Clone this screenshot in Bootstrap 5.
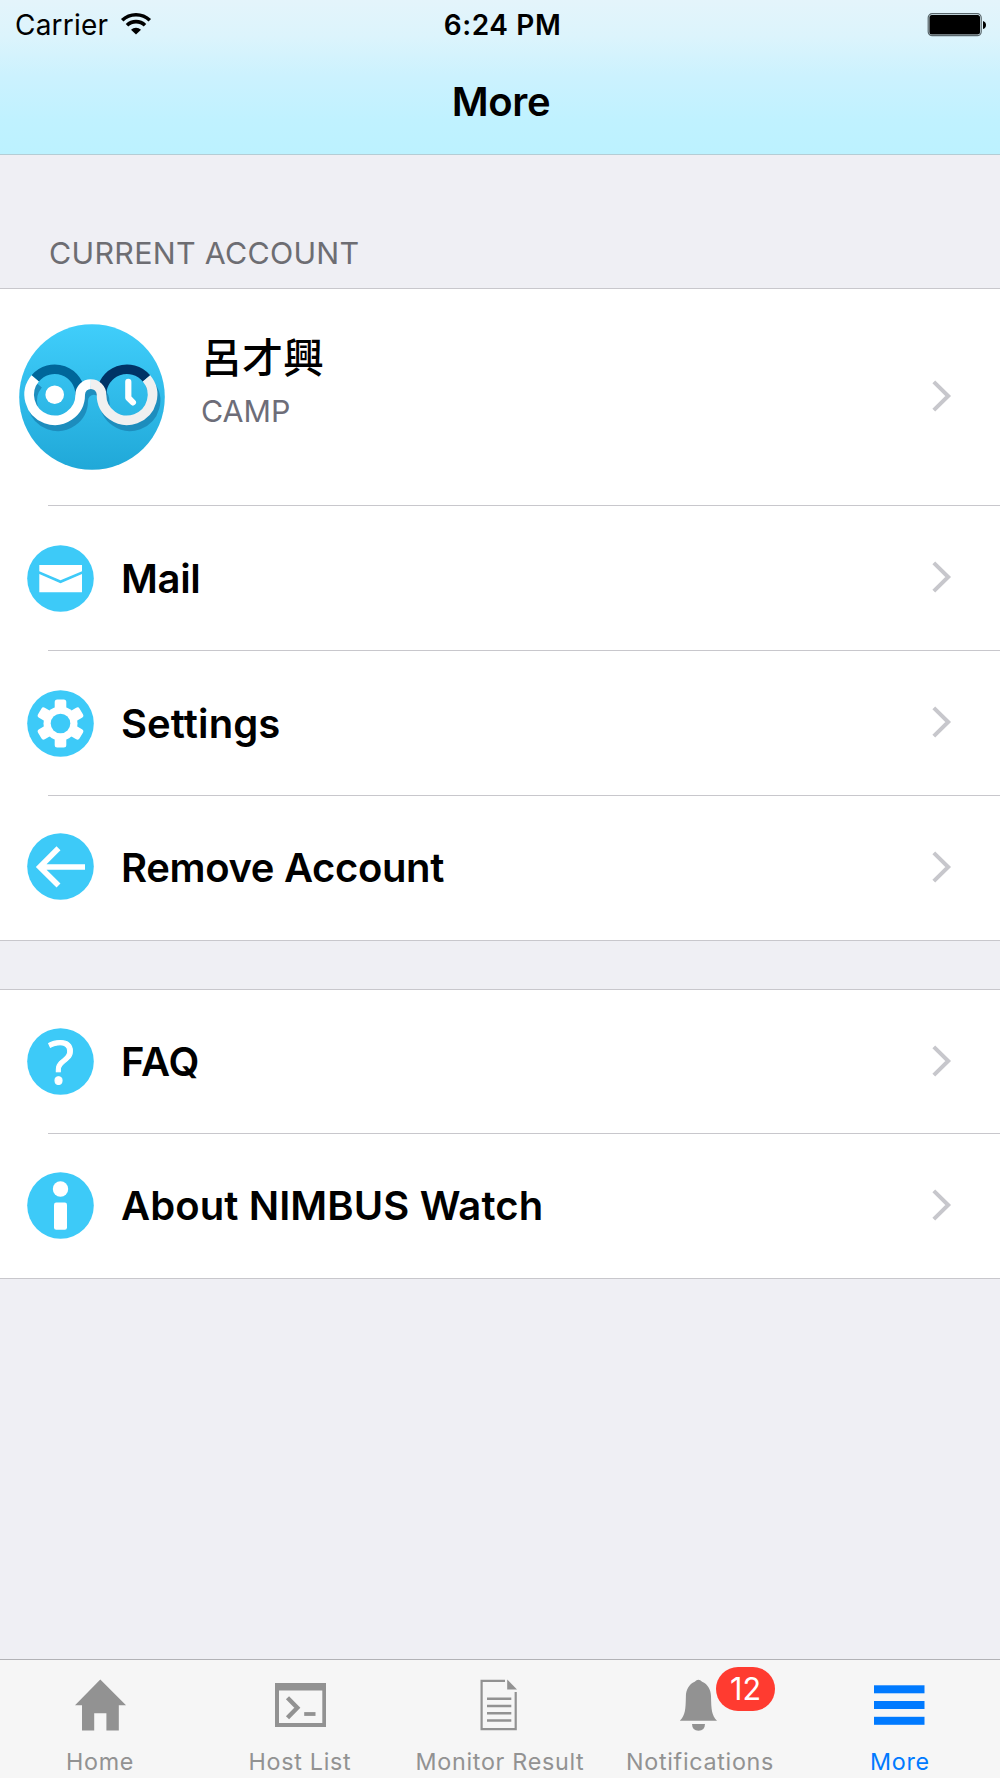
<!DOCTYPE html>
<html lang="en">
<head>
    <meta charset="UTF-8">
    <meta name="viewport" content="width=device-width, initial-scale=1.0">
    <title>More - NIMBUS Watch</title>
    <link href="https://cdn.jsdelivr.net/npm/bootstrap@5.3.3/dist/css/bootstrap.min.css" rel="stylesheet">
    <style>
        body {
            font-family: Inter, "Noto Sans CJK TC", sans-serif;
            background-color: #efeff4;
            color: #000;
            height: 1778px;
            overflow: hidden;
        }
        svg { display: block; flex: none; }
        .top-bar {
            height: 155px;
            background: linear-gradient(#e4f4fb 0, #dcf4fc 36px, #ccf2fe 75px, #c0f2ff 120px, #bcf2ff 154px);
            border-bottom: 1px solid #b4cdd5;
        }
        .status-bar {
            height: 50px;
            padding: 0 14px 0 15px;
            font-size: 27.5px;
            line-height: 50px;
        }
        .status-side { flex: 1 1 0; }
        .carrier { font-size: 28px; letter-spacing: .2px; }
        .wifi { margin: 0 0 2px 12px; }
        .clock { font-weight: 600; font-size: 28px; letter-spacing: .6px; padding-left: 4px; }
        .page-title {
            font-size: 40px;
            font-weight: 600;
            line-height: 48px;
            margin: 28px 0 0;
            padding-left: 2px;
            letter-spacing: -.4px;
        }
        .section-label {
            height: 133px;
            padding: 80px 0 0 49px;
            font-size: 30.4px;
            line-height: 36px;
            letter-spacing: .3px;
            color: #6d6d72;
        }
        .menu-group {
            border-top: 1px solid #c8c7cc;
            border-bottom: 1px solid #c8c7cc;
            background-color: #fff;
        }
        .menu-row {
            height: 145px;
            padding: 0 48px 0 27px;
            border: 0;
            color: #000;
            /* inset separator on the bottom edge */
            background: linear-gradient(#c8c7cc, #c8c7cc) no-repeat 48px 100% / 100% 1px #fff;
        }
        .menu-row:last-child { height: 144px; background-image: none; }
        .menu-group-help .menu-row { height: 144px; }
        .menu-row.profile-row { height: 217px; padding-left: 19px; }
        .avatar { margin-bottom: 2px; }
        .row-icon { margin-bottom: 1px; }
        .chevron { margin-bottom: 3px; }
        .menu-title {
            font-size: 40px;
            font-weight: 600;
            line-height: 48px;
            margin-left: 27px;
            letter-spacing: -.35px;
        }
        .menu-title-wide { letter-spacing: .1px; }
        .profile-text { margin: 0 0 37px 36px; }
        .profile-name {
            font-family: "Noto Sans CJK TC", sans-serif;
            font-size: 41px;
            font-weight: 500;
            line-height: 52px;
        }
        .profile-team { font-size: 30.4px; line-height: 38px; color: #6d6d78; margin-top: 11px; }
        .tab-bar {
            height: 119px;
            background-color: #f6f6f6;
            border-top: 1px solid #b2b2b6;
        }
        .tab-bar .nav-link {
            padding: 19px 0 0;
            font-size: 23.3px;
            line-height: 28px;
            letter-spacing: .7px;
            color: #929292;
            white-space: nowrap;
        }
        .tab-bar .nav-link.active { color: #007aff; }
        .tab-bar svg { margin: 0 auto 17px; }
        .alert-count {
            position: absolute;
            left: 42px;
            top: -12px;
            width: 59px;
            height: 44px;
            border-radius: 22px;
            background-color: #ff3b30;
            color: #fff;
            font-size: 30.5px;
            line-height: 43px;
            letter-spacing: 0;
        }
    </style>
</head>
<body class="d-flex flex-column">
    <header class="top-bar">
        <div class="status-bar d-flex align-items-center">
            <div class="status-side d-flex align-items-center">
                <span class="carrier">Carrier</span>
                <svg class="wifi" width="32" height="24" viewBox="0 0 32 24" fill="none" stroke="#000" stroke-width="3.6">
                    <path d="M2.2 8.2A20 20 0 0 1 29.8 8.2"/>
                    <path d="M7 13.2A13 13 0 0 1 25 13.2"/>
                    <path d="M11 17.8A7.4 7.4 0 0 1 21 17.8L16 22.6Z" fill="#000" stroke="none"/>
                </svg>
            </div>
            <span class="clock">6:24 PM</span>
            <div class="status-side d-flex justify-content-end">
                <svg width="59" height="24" viewBox="0 0 59 24">
                    <rect x="1.2" y=".7" width="53" height="22" rx="4" fill="#dff3fa" stroke="#59666b" stroke-width="1.2"/>
                    <rect x="2.4" y="1.9" width="50.6" height="19.6" rx="2.5"/>
                    <path d="M56 8q3 1 3 4t-3 4z"/>
                </svg>
            </div>
        </div>
        <h1 class="page-title text-center">More</h1>
    </header>

    <main class="flex-grow-1">
        <div class="section-label">CURRENT ACCOUNT</div>

        <!-- Account menu -->
        <div class="menu-group list-group list-group-flush rounded-0">
            <a href="#" class="menu-row profile-row list-group-item d-flex align-items-center">
                <svg class="avatar" width="146" height="146" viewBox="0 0 146 146" fill="none">
                    <defs>
                        <linearGradient id="sky" x1="0" y1="0" x2="0" y2="1">
                            <stop offset="0" stop-color="#40cefb"/>
                            <stop offset="1" stop-color="#20a8d8"/>
                        </linearGradient>
                        <clipPath id="disc"><circle cx="73" cy="73" r="72.8"/></clipPath>
                    </defs>
                    <circle cx="73" cy="73" r="72.8" fill="url(#sky)"/>
                    <g stroke-width="9.6">
                        <g clip-path="url(#disc)">
                            <path transform="translate(3 6)" stroke="#1b86b6" stroke-opacity=".85" d="M16.2 54.3A25.5 25.5 0 1 0 61.2 70.7A10.6 10.6 0 0 1 82.5 70.7A25.5 25.5 0 1 0 127.5 54.3"/>
                        </g>
                        <path stroke="#00669a" d="M16.2 54.3A25.5 25.5 0 0 1 61.2 70.7"/>
                        <path stroke="#003366" d="M82.5 70.7A25.5 25.5 0 0 1 127.5 54.3"/>
                        <path stroke="#fff" d="M16.2 54.3A25.5 25.5 0 1 0 61.2 70.7A10.6 10.6 0 0 1 71.85 60.1"/>
                        <path stroke="#f0f0f0" d="M71.85 60.1A10.6 10.6 0 0 1 82.5 70.7A25.5 25.5 0 1 0 127.5 54.3"/>
                    </g>
                    <circle cx="35.7" cy="70.7" r="9.3" fill="#fff"/>
                    <path d="M109.3 57.8V73.8L113.9 78.4" stroke="#fff" stroke-width="6.2" stroke-linecap="round" stroke-linejoin="round"/>
                </svg>
                <div class="profile-text flex-grow-1">
                    <div class="profile-name" lang="zh-Hant">呂才興</div>
                    <div class="profile-team">CAMP</div>
                </div>
                <svg class="chevron" width="20" height="32" viewBox="0 0 20 32" fill="none" stroke="#c7c7cc" stroke-width="4"><path d="M1.8 1.8L16.2 16L1.8 30.2"/></svg>
            </a>
            <a href="#" class="menu-row list-group-item d-flex align-items-center">
                <svg class="row-icon" width="67" height="67" viewBox="0 0 67 67">
                    <circle cx="33.5" cy="33.5" r="33.3" fill="#3dcaf8"/>
                    <path d="M12.3 20H55V26.2L33.5 35.3L12.3 26.2ZM12.3 29L33.5 38.2L55 29V47.3H12.3Z" fill="#fff"/>
                </svg>
                <span class="menu-title flex-grow-1">Mail</span>
                <svg class="chevron" width="20" height="32" viewBox="0 0 20 32" fill="none" stroke="#c7c7cc" stroke-width="4"><path d="M1.8 1.8L16.2 16L1.8 30.2"/></svg>
            </a>
            <a href="#" class="menu-row list-group-item d-flex align-items-center">
                <svg class="row-icon" width="67" height="67" viewBox="0 0 67 67" fill="#fff">
                    <circle cx="33.5" cy="33.5" r="33.3" fill="#3dcaf8"/>
                    <circle cx="33.5" cy="33.5" r="17"/>
                    <rect x="27.7" y="9.5" width="11.6" height="48" rx="2.5"/>
                    <rect x="27.7" y="9.5" width="11.6" height="48" rx="2.5" transform="rotate(60 33.5 33.5)"/>
                    <rect x="27.7" y="9.5" width="11.6" height="48" rx="2.5" transform="rotate(120 33.5 33.5)"/>
                    <circle cx="33.5" cy="33.5" r="9.8" fill="#3dcaf8"/>
                </svg>
                <span class="menu-title menu-title-wide flex-grow-1">Settings</span>
                <svg class="chevron" width="20" height="32" viewBox="0 0 20 32" fill="none" stroke="#c7c7cc" stroke-width="4"><path d="M1.8 1.8L16.2 16L1.8 30.2"/></svg>
            </a>
            <a href="#" class="menu-row list-group-item d-flex align-items-center">
                <svg class="mb-1" width="67" height="67" viewBox="0 0 67 67">
                    <circle cx="33.5" cy="33.5" r="33.3" fill="#3dcaf8"/>
                    <path d="M31.5 15.2L12.8 34L31.5 52.5M13 34H58" fill="none" stroke="#fff" stroke-width="5.6"/>
                </svg>
                <span class="menu-title flex-grow-1">Remove Account</span>
                <svg class="chevron" width="20" height="32" viewBox="0 0 20 32" fill="none" stroke="#c7c7cc" stroke-width="4"><path d="M1.8 1.8L16.2 16L1.8 30.2"/></svg>
            </a>
        </div>

        <!-- Help menu -->
        <div class="menu-group menu-group-help list-group list-group-flush rounded-0 mt-5">
            <a href="#" class="menu-row list-group-item d-flex align-items-center">
                <svg class="row-icon" width="67" height="67" viewBox="0 0 67 67">
                    <circle cx="33.5" cy="33.5" r="33.3" fill="#3dcaf8"/>
                    <text x="34" y="56" text-anchor="middle" font-family="Open Sans" font-size="61" fill="#fff" stroke="#fff" stroke-width="1">?</text>
                </svg>
                <span class="menu-title menu-title-wide flex-grow-1">FAQ</span>
                <svg class="chevron" width="20" height="32" viewBox="0 0 20 32" fill="none" stroke="#c7c7cc" stroke-width="4"><path d="M1.8 1.8L16.2 16L1.8 30.2"/></svg>
            </a>
            <a href="#" class="menu-row list-group-item d-flex align-items-center">
                <svg class="row-icon" width="67" height="67" viewBox="0 0 67 67" fill="#fff">
                    <circle cx="33.5" cy="33.5" r="33.3" fill="#3dcaf8"/>
                    <circle cx="33.5" cy="17" r="7.7"/>
                    <rect x="27" y="30.5" width="13" height="27.3" rx="2.2"/>
                </svg>
                <span class="menu-title menu-title-wide flex-grow-1">About NIMBUS Watch</span>
                <svg class="chevron" width="20" height="32" viewBox="0 0 20 32" fill="none" stroke="#c7c7cc" stroke-width="4"><path d="M1.8 1.8L16.2 16L1.8 30.2"/></svg>
            </a>
        </div>
    </main>

    <nav class="tab-bar nav nav-justified flex-nowrap text-center">
        <a href="#" class="nav-link">
            <svg width="52" height="52" viewBox="0 0 52 52" fill="#929292">
                <path d="M26.3 .5L52 26.2H44.8V51.5H32.4V34.3H20.2V51.5H8V26.2H1Z"/>
            </svg>
            Home
        </a>
        <a href="#" class="nav-link">
            <svg width="52" height="52" viewBox="0 0 52 52" fill="none" stroke="#929292">
                <path d="M1 4H52V48H1ZM5 11.5V44H48.3V11.5Z" fill="#929292" fill-rule="evenodd" stroke="none"/>
                <path d="M13.5 18.8L23.3 28.8L13.5 38.8" stroke-width="4.4"/>
                <path d="M30.2 35H41.5" stroke-width="3.8"/>
            </svg>
            Host List
        </a>
        <a href="#" class="nav-link">
            <svg width="52" height="52" viewBox="0 0 52 52" fill="none" stroke="#929292" stroke-width="2.2">
                <path d="M31 1.8H7.6V50.2H41.7V13"/>
                <path d="M33.2 .5L43 10.5H33.2Z" fill="#929292" stroke="none"/>
                <path d="M13 19.8H37.3M13 27H37.3M13 34.2H37.3M13 41.5H37.3" stroke-width="2.4"/>
            </svg>
            Monitor Result
        </a>
        <a href="#" class="nav-link">
            <div class="position-relative mx-auto" style="width: 52px">
                <svg width="52" height="52" viewBox="0 0 52 52" fill="#929292">
                    <path d="M20.7 2.8Q24.4-1.5 28.1 2.8C33.8 5 36.9 11 37 17C37.3 31 37.6 36 43 41.8H5.8C11.3 36 11.6 31 11.9 17C12 11 15 5 20.7 2.8Z"/>
                    <path d="M18 45H31Q30.8 51.8 24.5 51.8Q18.2 51.8 18 45Z"/>
                </svg>
                <span class="alert-count">12</span>
            </div>
            Notifications
        </a>
        <a href="#" class="nav-link active">
            <svg width="52" height="52" viewBox="0 0 52 52" fill="#007aff">
                <rect x="-.5" y="6.3" width="51" height="8"/>
                <rect x="-.5" y="22" width="51" height="8"/>
                <rect x="-.5" y="37.8" width="51" height="8"/>
            </svg>
            More
        </a>
    </nav>

    <script src="https://cdn.jsdelivr.net/npm/bootstrap@5.3.3/dist/js/bootstrap.bundle.min.js"></script>
</body>
</html>
